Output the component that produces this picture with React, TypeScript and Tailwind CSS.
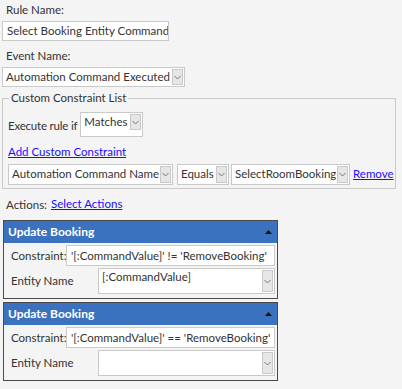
import React from 'react'

const Chevron: React.FC = () => (
  <svg width="7" height="5" viewBox="0 0 7 5" className="block">
    <path d="M0.5 1 L3.5 4 L6.5 1" fill="none" stroke="#777" strokeWidth="1" />
  </svg>
)

interface DropProps {
  value: string
  className?: string
  btnClass?: string
}

// old IE style select: white box with a grey button on the right
const Drop: React.FC<DropProps> = ({ value, className = '', btnClass = 'self-stretch' }) => (
  <div className={`flex items-start bg-white border border-[#c9c9c9] ${className}`}>
    <span className="flex-1 min-w-0 px-[3px] leading-[18px] whitespace-nowrap overflow-hidden">{value}</span>
    <span className={`w-[11px] shrink-0 flex items-center justify-center bg-[#e6e6e6] border border-[#c9c9c9] m-[1px] ${btnClass}`}>
      <Chevron />
    </span>
  </div>
)

const Panel: React.FC<{ constraint: string; entity: string }> = ({ constraint, entity }) => (
  <div className="w-[275px] border border-[#4a4a4a] bg-[#f4f4f4]">
    <div className="h-[22px] bg-[#3b72c0] flex items-center justify-between pl-[4px] pr-[5px]">
      <span className="text-white font-bold text-[12px]">Update Booking</span>
      <svg width="7" height="4" viewBox="0 0 7 4">
        <path d="M0 4 L3.5 0 L7 4 Z" fill="#111" />
      </svg>
    </div>
    <div className="flex items-center pl-[7px] pr-[2px] pt-[2px]">
      <span className="w-[55px]">Constraint:</span>
      <div className="flex-1 h-[21px] bg-white border border-[#c9c9c9] px-[4px] leading-[19px] whitespace-nowrap overflow-hidden">
        {constraint}
      </div>
    </div>
    <div className="flex items-center pl-[7px] pr-[2px] pt-[2px] pb-[4px]">
      <span className="w-[87px]">Entity Name</span>
      <div className="flex-1 h-[26px] flex items-start bg-white border border-[#c9c9c9]">
        <span className="flex-1 px-[3px] leading-[16px]">{entity}</span>
        <span className="w-[11px] h-[22px] flex items-center justify-center bg-[#e6e6e6] border border-[#c9c9c9] m-[1px]">
          <Chevron />
        </span>
      </div>
    </div>
  </div>
)

const App: React.FC = () => {
  return (
    <div className="w-[402px] h-[389px] bg-[#f4f4f4] text-[#333] text-[11.5px] leading-[16px] font-['Lato',sans-serif] px-[2px] pt-[2px]">
      <div className="pl-[4px]">Rule Name:</div>
      <div className="mt-[3px] w-[167px] h-[20px] bg-white border border-[#c9c9c9] px-[4px] leading-[18px] whitespace-nowrap overflow-hidden">
        Select Booking Entity Command
      </div>
      <div className="mt-[7px] pl-[4px]">Event Name:</div>
      <Drop value="Automation Command Executed" className="mt-[3px] w-[183px] h-[20px]" />

      <fieldset className="mt-[4px] w-[394px] min-w-0 border border-[#c9c9c9] px-[5px] pb-[3px] pt-[7px]">
        <legend className="px-[2px] ml-[1px] leading-[14px]">Custom Constraint List</legend>
        <div className="flex items-start">
          <span className="mt-[6px] mr-[3px] shrink-0 whitespace-nowrap tracking-[-0.2px]">Execute rule if</span>
          <Drop value="Matches" className="w-[63px] h-[25px]" btnClass="h-[16px]" />
        </div>
        <div className="mt-[7px] leading-[16px]">
          <a href="#" className="text-[#1a0dff] underline">Add Custom Constraint</a>
        </div>
        <div className="mt-[4px] flex items-center">
          <Drop value="Automation Command Name" className="w-[165px] h-[21px]" />
          <Drop value="Equals" className="ml-[4px] w-[52px] h-[21px]" />
          <Drop value="SelectRoomBooking" className="ml-[2px] w-[119px] h-[21px]" />
          <a href="#" className="ml-[3px] text-[#1a0dff] underline -mt-[2px]">Remove</a>
        </div>
      </fieldset>

      <div className="mt-[8px] pl-[4px] flex items-center">
        <span>Actions:</span>
        <a href="#" className="ml-[4px] text-[#1a0dff] underline -mt-[2px]">Select Actions</a>
      </div>
      <div className="mt-[7px] pl-[1px] flex flex-col gap-[3px]">
        <Panel constraint="'[:CommandValue]' != 'RemoveBooking'" entity="[:CommandValue]" />
        <Panel constraint="'[:CommandValue]' == 'RemoveBooking'" entity="" />
      </div>
    </div>
  )
}

export default App
